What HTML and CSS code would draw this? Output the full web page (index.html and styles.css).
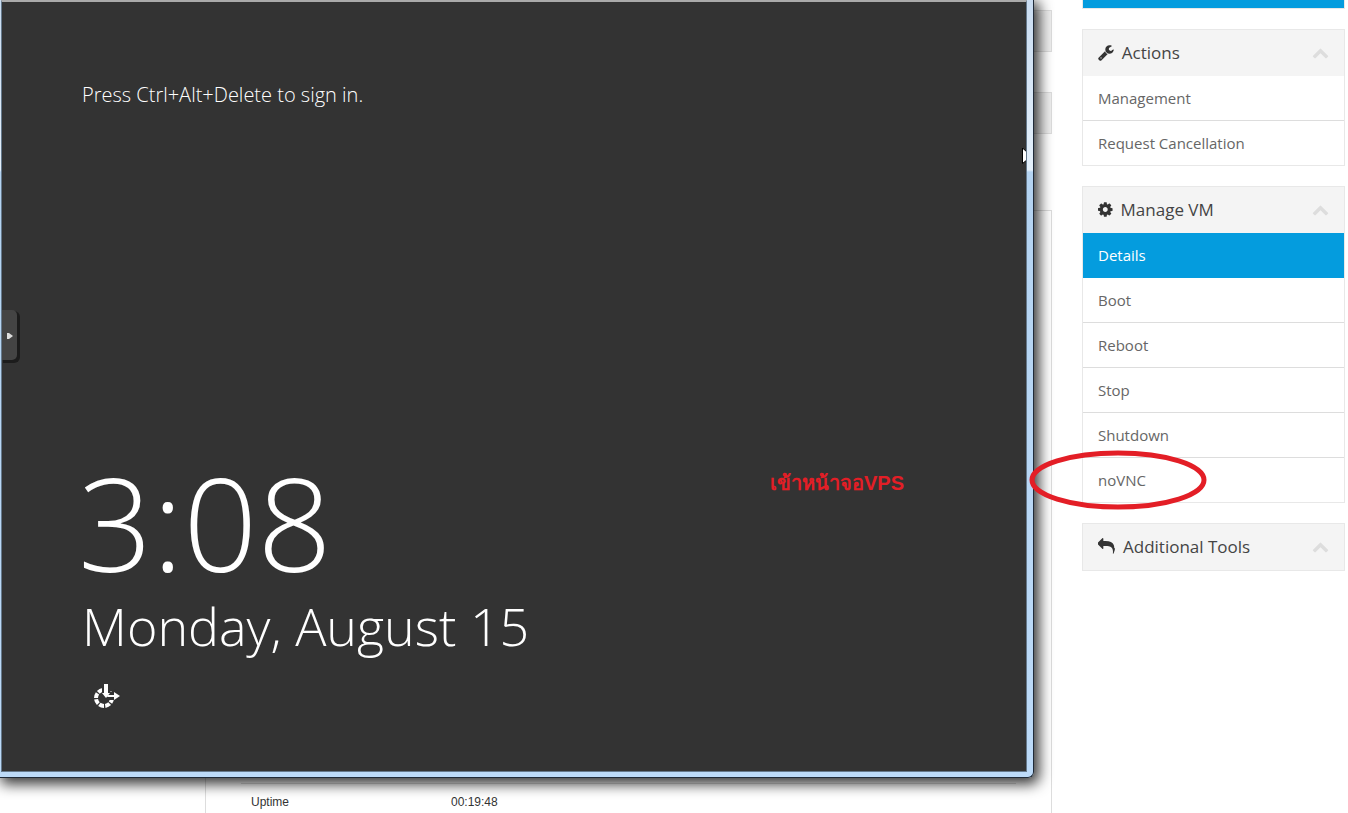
FILE: index.html
```
<!DOCTYPE html>
<html lang="en">
<head>
    <meta charset="UTF-8">
    <meta name="viewport" content="width=device-width, initial-scale=1.0">
    <title>Manage VM</title>
    <link rel="stylesheet" href="styles.css">
</head>
<body>
    <div class="page">
        <main class="content">
            <div class="bar"></div>
            <div class="bar"></div>
            <div class="details">
                <table>
                    <tr>
                        <th scope="row">Uptime</th>
                        <td>00:19:48</td>
                    </tr>
                </table>
            </div>
        </main>

        <aside class="sidebar">
            <div class="panel panel-end"></div>

            <section class="panel">
                <h3>
                    <svg class="icon" viewBox="0 0 1664 1792"><path transform="translate(0 1536) scale(1 -1)" d="M384 64q0 26 -19 45t-45 19t-45 -19t-19 -45t19 -45t45 -19t45 19t19 45zM1028 484l-682 -682q-37 -37 -90 -37q-52 0 -91 37l-106 108q-38 36 -38 90q0 53 38 91l681 681q39 -98 114.5 -173.5t173.5 -114.5zM1662 919q0 -39 -23 -106q-47 -134 -164.5 -217.5t-258.5 -83.5q-185 0 -316.5 131.5t-131.5 316.5t131.5 316.5t316.5 131.5q58 0 121.5 -16.5t107.5 -46.5q16 -11 16 -28t-16 -28l-293 -169v-224l193 -107q5 3 79 48.5t135.5 81t70.5 35.5q15 0 23.5 -10t8.5 -25z"/></svg>
                    Actions
                    <svg class="icon chevron" viewBox="0 0 1792 1792"><path transform="translate(0 1536) scale(1 -1)" d="M1683 205l-166 -165q-19 -19 -45 -19t-45 19l-531 531l-531 -531q-19 -19 -45 -19t-45 19l-166 165q-19 19 -19 45.5t19 45.5l742 741q19 19 45 19t45 -19l742 -741q19 -19 19 -45.5t-19 -45.5z"/></svg>
                </h3>
                <a href="#">Management</a>
                <a href="#">Request Cancellation</a>
            </section>

            <section class="panel">
                <h3>
                    <svg class="icon" viewBox="0 0 1536 1792"><path transform="translate(0 1536) scale(1 -1)" d="M1024 640q0 106 -75 181t-181 75t-181 -75t-75 -181t75 -181t181 -75t181 75t75 181zM1536 749v-222q0 -12 -8 -23t-20 -13l-185 -28q-19 -54 -39 -91q35 -50 107 -138q10 -12 10 -25t-9 -23q-27 -37 -99 -108t-94 -71q-12 0 -26 9l-138 108q-44 -23 -91 -38q-16 -136 -29 -186q-7 -28 -36 -28h-222q-14 0 -24.5 8.5t-11.5 21.5l-28 184q-49 16 -90 37l-141 -107q-10 -9 -25 -9q-14 0 -25 11q-126 114 -165 168q-7 10 -7 23q0 12 8 23q15 21 51 66.5t54 70.5q-27 50 -41 99l-183 27q-13 2 -21 12.5t-8 23.5v222q0 12 8 23t19 13l186 28q14 46 39 92q-40 57 -107 138q-10 12 -10 24q0 10 9 23q26 36 98.5 107.5t94.5 71.5q13 0 26 -10l138 -107q44 23 91 38q16 136 29 186q7 28 36 28h222q14 0 24.5 -8.5t11.5 -21.5l28 -184q49 -16 90 -37l142 107q9 9 24 9q13 0 25 -10q129 -119 165 -170q7 -8 7 -22q0 -12 -8 -23q-15 -21 -51 -66.5t-54 -70.5q26 -50 41 -98l183 -28q13 -2 21 -12.5t8 -23.5z"/></svg>
                    Manage VM
                    <svg class="icon chevron" viewBox="0 0 1792 1792"><path transform="translate(0 1536) scale(1 -1)" d="M1683 205l-166 -165q-19 -19 -45 -19t-45 19l-531 531l-531 -531q-19 -19 -45 -19t-45 19l-166 165q-19 19 -19 45.5t19 45.5l742 741q19 19 45 19t45 -19l742 -741q19 -19 19 -45.5t-19 -45.5z"/></svg>
                </h3>
                <a href="#" class="active">Details</a>
                <a href="#">Boot</a>
                <a href="#">Reboot</a>
                <a href="#">Stop</a>
                <a href="#">Shutdown</a>
                <a href="#" class="marked">noVNC
                    <svg class="ring" viewBox="0 0 178 60"><ellipse cx="89" cy="30" rx="86" ry="27"/></svg>
                </a>
            </section>

            <section class="panel">
                <h3>
                    <svg class="icon" viewBox="0 0 1792 1792"><path transform="translate(0 1536) scale(1 -1)" d="M1792 416q0 -166 -127 -451q-3 -7 -10.5 -24t-13.5 -30t-13 -22q-12 -17 -28 -17q-15 0 -23.5 10t-8.5 25q0 9 2.5 26.5t2.5 23.5q5 68 5 123q0 112 -19.5 200.5t-54 153.5t-89 112t-117.5 78.5t-146.5 44.5t-172 21.5t-192.5 6.5h-224v-256q0 -26 -19 -45t-45 -19t-45 19l-512 512q-19 19 -19 45t19 45l512 512q19 19 45 19t45 -19t19 -45v-256h224q713 0 875 -403q53 -134 53 -333z"/></svg>
                    Additional Tools
                    <svg class="icon chevron" viewBox="0 0 1792 1792"><path transform="translate(0 1536) scale(1 -1)" d="M1683 205l-166 -165q-19 -19 -45 -19t-45 19l-531 531l-531 -531q-19 -19 -45 -19t-45 19l-166 165q-19 19 -19 45.5t19 45.5l742 741q19 19 45 19t45 -19l742 -741q19 -19 19 -45.5t-19 -45.5z"/></svg>
                </h3>
            </section>
        </aside>
    </div>

    <!-- console window over the page -->
    <div class="vnc">
        <div class="screen">
            <p class="hint">Press Ctrl+Alt+Delete to sign in.</p>
            <div class="time">3:08</div>
            <div class="date">Monday, August 15</div>
            <svg class="ease" viewBox="0 0 28 26">
                <circle cx="11" cy="15" r="8" fill="none" stroke="#fff" stroke-width="4" stroke-dasharray="5 1.28" pathLength="50.24"/>
                <path d="M9 0h8v9h4v-3l7 6v2l-7 6v-3h-7l-5-5z" fill="#333"/>
                <path d="M11 1h4v9h2l-4 5l-4-5h2z" fill="#fff"/>
                <path d="M15 12h6v-3l6 4l-6 4v-3h-7z" fill="#fff"/>
            </svg>
            <button class="handle" aria-label="Open control bar"><svg viewBox="0 0 6 8"><path d="M0 1h2l4 3l-4 3H0z"/></svg></button>
            <p class="note">เข้าหน้าจอVPS</p>
            <svg class="cursor" viewBox="0 0 4 16"><path d="M.5 0v15.500l5-4v-7z" fill="#fff" stroke="#000"/></svg>
        </div>
    </div>
</body>
</html>
```
FILE: styles.css
```
* {
    box-sizing: border-box;
}

body {
    margin: 0;
    background: #fff;
    font-family: "Open Sans", sans-serif;
    font-size: 15px;
    color: #666;
    overflow: hidden;
}

h3, p {
    margin: 0;
}

.page {
    display: flex;
    gap: 30px;
    min-height: 100vh;
    padding-left: 205px;
    padding-right: 3px;
}

.content {
    flex: 1;
    display: flex;
    flex-direction: column;
    padding-top: 10px;
}

.bar {
    height: 42px;
    margin-bottom: 40px;
    background: #efefef;
    border: 1px solid #ddd;
}

.details {
    flex: 1;
    display: flex;
    align-items: flex-end;
    margin-top: 36px;
    padding: 0 35px;
    border: 1px solid #ddd;
    border-bottom: none;
}

.details table {
    width: 100%;
    border-collapse: collapse;
    border-top: 1px solid #ddd;
    font-family: "Liberation Sans", Arial, sans-serif;
    font-size: 12px;
    color: #333;
}

.details th,
.details td {
    height: 30px;
    padding: 8px 10px 0;
    font-weight: normal;
    text-align: left;
}

.details th {
    width: 200px;
}

/* sidebar */
.sidebar {
    width: 263px;
}

.panel {
    margin-bottom: 20px;
    border: 1px solid #e8e8e8;
}

.panel-end {
    height: 9px;
    border-top: none;
    background: #049cde;
}

.panel h3 {
    display: flex;
    align-items: center;
    gap: 8px;
    height: 46px;
    padding: 0 15px 2px;
    background: #f4f4f4;
    font-size: 17px;
    font-weight: normal;
    color: #444;
}

.icon {
    height: 17px;
    fill: #333;
}

.chevron {
    margin-left: auto;
    fill: #ddd;
}

.panel a {
    display: block;
    height: 45px;
    padding: 0 15px;
    border-bottom: 1px solid #ddd;
    line-height: 44px;
    color: #666;
    text-decoration: none;
}

.panel a:last-child {
    height: 44px;
    border-bottom: none;
}

.panel a.active {
    background: #049cde;
    border-color: #049cde;
    color: #fff;
}

.marked {
    position: relative;
}

.ring {
    position: absolute;
    left: -54px;
    top: -8px;
    width: 178px;
    height: 60px;
    fill: none;
    stroke: #e31e26;
    stroke-width: 5;
    z-index: 2;
}

/* vnc window */
.vnc {
    position: absolute;
    top: 0;
    left: 0;
    width: calc(100% - 314px);
    padding: 0 6px 5px 1px;
    background: linear-gradient(#c9dcf1, #e4f0fb 170px, #b4d3f1 172px, #bcdaf8);
    border-right: 1px solid #1f2a38;
    border-bottom: 1px solid #1f2a38;
    border-radius: 0 0 6px 0;
    box-shadow: 3px 4px 14px 2px rgba(0, 0, 0, 0.8);
}

.screen {
    position: relative;
    padding: 78px 80px 62px;
    background: #333;
    border: 1px solid #65798c;
    border-top: 2px solid #aaa;
    color: #fff;
    font-weight: 300;
}

.hint {
    font-size: 20px;
    line-height: 30px;
}

.time {
    margin-top: 338px;
    margin-left: -4px;
    font-size: 130px;
    line-height: 148px;
}

.date {
    font-size: 52px;
    line-height: 60px;
}

.ease {
    display: block;
    width: 28px;
    height: 26px;
    margin: 27px 0 0 11px;
}

.handle {
    position: absolute;
    left: 0;
    top: 308px;
    width: 15px;
    height: 50px;
    padding: 0;
    background: #444;
    border: none;
    border-radius: 0 5px 5px 0;
    box-shadow: 2px 2px 0 1px #1c1c1c;
}

.handle svg {
    width: 6px;
    height: 8px;
    fill: #ddd;
}

.note {
    position: absolute;
    right: 122px;
    top: 466px;
    font-family: "Liberation Sans", Arial, sans-serif;
    font-size: 20px;
    font-weight: bold;
    line-height: 30px;
    color: #e31e26;
}

.cursor {
    position: absolute;
    right: 0;
    top: 146px;
    width: 4px;
    height: 16px;
}
```
